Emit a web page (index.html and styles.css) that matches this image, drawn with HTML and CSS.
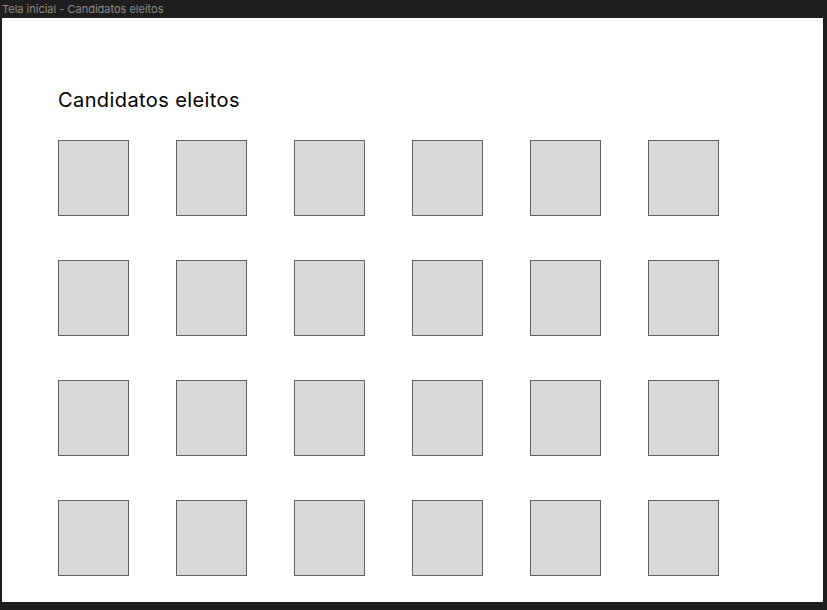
FILE: index.html
```html
<!DOCTYPE html>
<html lang="pt">
<head>
<meta charset="utf-8">
<title>Tela inicial - Candidatos eleitos</title>
<link rel="stylesheet" href="styles.css">
</head>
<body>
<div class="label">Tela inicial - Candidatos eleitos</div>
<main class="frame">
  <h1 class="title">Candidatos eleitos</h1>
  <div class="grid">
    <div class="card"></div><div class="card"></div><div class="card"></div><div class="card"></div><div class="card"></div><div class="card"></div>
    <div class="card"></div><div class="card"></div><div class="card"></div><div class="card"></div><div class="card"></div><div class="card"></div>
    <div class="card"></div><div class="card"></div><div class="card"></div><div class="card"></div><div class="card"></div><div class="card"></div>
    <div class="card"></div><div class="card"></div><div class="card"></div><div class="card"></div><div class="card"></div><div class="card"></div>
  </div>
</main>
</body>
</html>
```
FILE: styles.css
```css
html, body {
  margin: 0;
  padding: 0;
  background: #1e1e1e;
  height: 610px;
  overflow: hidden;
}
body {
  font-family: Inter, "Noto Sans", sans-serif;
}
.label {
  height: 18px;
  padding-left: 2px;
  font-size: 11px;
  line-height: 18px;
  color: #8c8c8c;
  white-space: nowrap;
}
.frame {
  box-sizing: border-box;
  margin: 0 4px 0 2px;
  height: 584px;
  background: #ffffff;
  padding: 70px 0 0 56px;
}
.title {
  margin: 0;
  font-weight: 400;
  font-size: 20px;
  line-height: 24px;
  letter-spacing: 0.4px;
  color: #000000;
}
.grid {
  margin-top: 28px;
  display: grid;
  grid-template-columns: repeat(6, 71px);
  grid-auto-rows: 76px;
  column-gap: 47px;
  row-gap: 44px;
}
.card {
  box-sizing: border-box;
  background: #d9d9d9;
  border: 1px solid #626262;
}
```
